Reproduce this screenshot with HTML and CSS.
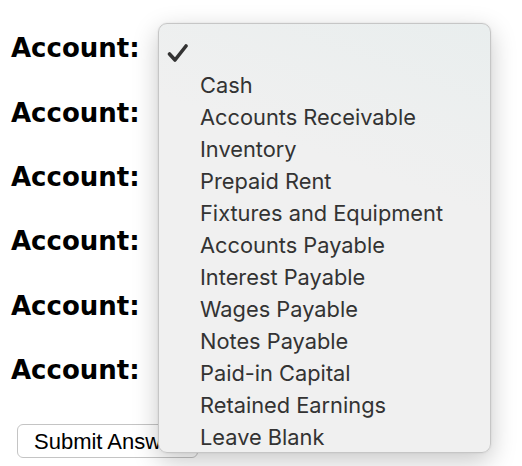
FILE: index.html
```html
<!DOCTYPE html>
<html>
<head>
<meta charset="utf-8">
<link rel="stylesheet" href="styles.css">
</head>
<body>
<div class="form">
  <div class="row"><span class="label">Account:</span></div>
  <div class="row"><span class="label">Account:</span></div>
  <div class="row"><span class="label">Account:</span></div>
  <div class="row"><span class="label">Account:</span></div>
  <div class="row"><span class="label">Account:</span></div>
  <div class="row"><span class="label">Account:</span></div>
  <button class="submit">Submit Answer</button>
</div>
<ul class="menu">
  <li class="item checked"><svg class="check" width="22" height="20" viewBox="0 0 22 20"><path d="M2.5 11 L8 17 L19 3" fill="none" stroke="#333" stroke-width="3.6" stroke-linecap="round" stroke-linejoin="round"/></svg></li>
  <li class="item">Cash</li>
  <li class="item">Accounts Receivable</li>
  <li class="item">Inventory</li>
  <li class="item">Prepaid Rent</li>
  <li class="item">Fixtures and Equipment</li>
  <li class="item">Accounts Payable</li>
  <li class="item">Interest Payable</li>
  <li class="item">Wages Payable</li>
  <li class="item">Notes Payable</li>
  <li class="item">Paid-in Capital</li>
  <li class="item">Retained Earnings</li>
  <li class="item">Leave Blank</li>
</ul>
</body>
</html>
```
FILE: styles.css
```css
html, body {
  margin: 0;
  padding: 0;
  background: #ffffff;
  overflow: hidden;
}
.form {
  padding: 16px 0 0 11px;
  display: flex;
  flex-direction: column;
  align-items: flex-start;
}
.row {
  height: 64.4px;
  display: flex;
  align-items: center;
}
.label {
  font-family: "DejaVu Sans", Verdana, sans-serif;
  font-weight: bold;
  font-size: 26px;
  color: #000;
}
.submit {
  margin: 22px 0 0 6px;
  height: 34px;
  padding: 2px 16px 0 16px;
  background: #fff;
  border: 1px solid #c4c4c4;
  border-radius: 6px;
  font-family: "Liberation Sans", Arial, sans-serif;
  font-size: 22px;
  color: #000;
}
.menu {
  position: absolute;
  left: 158px;
  top: 23px;
  width: 333px;
  height: 430px;
  margin: 0;
  padding: 13px 0 0 0;
  box-sizing: border-box;
  list-style: none;
  background: linear-gradient(200deg, #e9eeee 0%, #f0f0f0 35%, #f0f0f0 100%);
  border: 1px solid #c6c6c6;
  border-radius: 9px;
  box-shadow: 0 8px 26px rgba(0, 0, 0, 0.22), 0 0 2px rgba(0,0,0,0.1);
}
.item {
  height: 32px;
  line-height: 32px;
  padding-left: 41px;
  font-family: Inter, "Liberation Sans", sans-serif;
  font-size: 21.8px;
  color: #333;
  white-space: nowrap;
}
.item.checked {
  padding-left: 8px;
  display: flex;
  align-items: center;
}
.check {
  display: block;
}
```
